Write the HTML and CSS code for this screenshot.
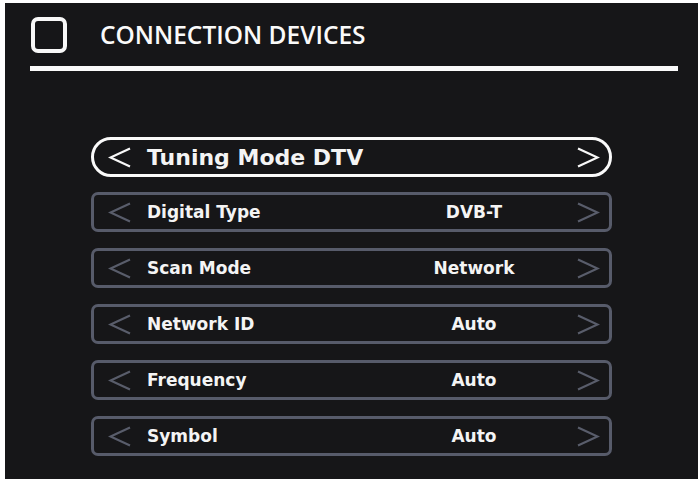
FILE: index.html
```html
<!DOCTYPE html>
<html>
<head>
<meta charset="utf-8">
<link rel="stylesheet" href="styles.css">
</head>
<body>
<div class="screen">
  <div class="header">
    <div class="checkbox"></div>
    <div class="title">CONNECTION DEVICES</div>
  </div>
  <div class="rule"></div>
  <div class="list">
    <div class="row selected">
      <svg class="chev" viewBox="0 0 24 21"><polyline points="22,1.5 2.5,10.5 22,19.5"/></svg>
      <div class="label big">Tuning Mode DTV</div>
      <div class="value"></div>
      <svg class="chev" viewBox="0 0 24 21"><polyline points="2,1.5 21.5,10.5 2,19.5"/></svg>
    </div>
    <div class="row">
      <svg class="chev" viewBox="0 0 24 21"><polyline points="22,1.5 2.5,10.5 22,19.5"/></svg>
      <div class="label">Digital Type</div>
      <div class="value">DVB-T</div>
      <svg class="chev" viewBox="0 0 24 21"><polyline points="2,1.5 21.5,10.5 2,19.5"/></svg>
    </div>
    <div class="row">
      <svg class="chev" viewBox="0 0 24 21"><polyline points="22,1.5 2.5,10.5 22,19.5"/></svg>
      <div class="label">Scan Mode</div>
      <div class="value">Network</div>
      <svg class="chev" viewBox="0 0 24 21"><polyline points="2,1.5 21.5,10.5 2,19.5"/></svg>
    </div>
    <div class="row">
      <svg class="chev" viewBox="0 0 24 21"><polyline points="22,1.5 2.5,10.5 22,19.5"/></svg>
      <div class="label">Network ID</div>
      <div class="value">Auto</div>
      <svg class="chev" viewBox="0 0 24 21"><polyline points="2,1.5 21.5,10.5 2,19.5"/></svg>
    </div>
    <div class="row">
      <svg class="chev" viewBox="0 0 24 21"><polyline points="22,1.5 2.5,10.5 22,19.5"/></svg>
      <div class="label">Frequency</div>
      <div class="value">Auto</div>
      <svg class="chev" viewBox="0 0 24 21"><polyline points="2,1.5 21.5,10.5 2,19.5"/></svg>
    </div>
    <div class="row">
      <svg class="chev" viewBox="0 0 24 21"><polyline points="22,1.5 2.5,10.5 22,19.5"/></svg>
      <div class="label">Symbol</div>
      <div class="value">Auto</div>
      <svg class="chev" viewBox="0 0 24 21"><polyline points="2,1.5 21.5,10.5 2,19.5"/></svg>
    </div>
  </div>
</div>
</body>
</html>
```
FILE: styles.css
```css
html, body {
  margin: 0;
  padding: 0;
  background: #ffffff;
}
body {
  width: 698px;
  height: 479px;
  overflow: hidden;
}
.screen {
  margin: 3px 0 0 5px;
  width: 693px;
  height: 476px;
  background: #161618;
  color: #f4f4f4;
  font-family: "DejaVu Sans", "Lato", sans-serif;
  overflow: hidden;
}
.header {
  display: flex;
  align-items: center;
  padding: 14px 0 0 26px;
  height: 35px;
}
.checkbox {
  width: 28px;
  height: 28px;
  border: 4px solid #f8f8f8;
  border-radius: 7px;
}
.title {
  margin-left: 33px;
  font-family: "Open Sans", sans-serif;
  font-weight: 600;
  font-size: 24.5px;
  color: #fafafa;
}
.rule {
  margin: 14px 0 0 25px;
  width: 648px;
  height: 5px;
  background: #fafafa;
}
.list {
  margin: 66px 0 0 86px;
  width: 521px;
  display: flex;
  flex-direction: column;
  gap: 16px;
}
.row {
  box-sizing: border-box;
  height: 40px;
  border: 3px solid #575b6a;
  border-radius: 7px;
  display: grid;
  grid-template-columns: 24px 1fr 204px 24px;
  align-items: center;
  padding: 0 9px 0 14px;
}
.row.selected {
  border-color: #fafafa;
  border-radius: 20px;
}
.row:first-child + .row {
  margin-top: -1px;
}
.chev {
  width: 24px;
  height: 21px;
  display: block;
}
.chev polyline {
  fill: none;
  stroke: #595d6b;
  stroke-width: 2.2;
  stroke-linejoin: miter;
}
.selected .chev polyline {
  stroke: #f8f8f8;
}
.label {
  margin-left: 15px;
  font-weight: 700;
  font-size: 17px;
  white-space: nowrap;
}
.label.big {
  font-size: 22px;
}
.value {
  text-align: center;
  font-weight: 700;
  font-size: 17px;
}
```
